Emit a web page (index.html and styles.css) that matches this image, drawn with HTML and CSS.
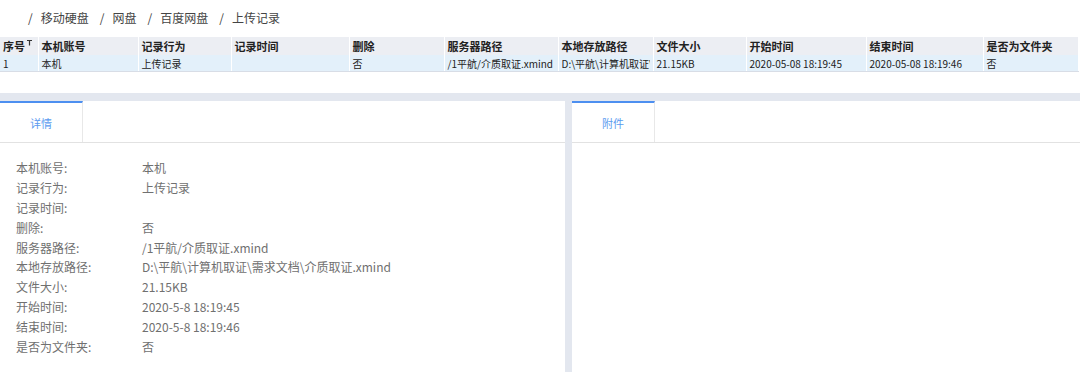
FILE: index.html
```html
<!DOCTYPE html>
<html lang="zh-CN">
<head>
    <meta charset="UTF-8">
    <title>上传记录</title>
    <link rel="stylesheet" href="styles.css">
</head>
<body>

    <nav class="crumbs">
        <span class="sep">/</span><span>移动硬盘</span>
        <span class="sep">/</span><span>网盘</span>
        <span class="sep">/</span><span>百度网盘</span>
        <span class="sep">/</span><span>上传记录</span>
    </nav>

    <table class="grid">
        <colgroup>
            <col style="width:38px"><col style="width:100px"><col style="width:93px"><col style="width:118px">
            <col style="width:95px"><col style="width:114px"><col style="width:95px"><col style="width:93px">
            <col style="width:120px"><col style="width:117px"><col style="width:95px"><col>
        </colgroup>
        <thead>
            <tr>
                <th>序号<svg class="pin" width="5" height="6" viewBox="0 0 5 6"><path d="M0 0.5h5M2.5 0.5v5" stroke="#333" stroke-width="1.2" fill="none"/></svg></th>
                <th>本机账号</th>
                <th>记录行为</th>
                <th>记录时间</th>
                <th>删除</th>
                <th>服务器路径</th>
                <th>本地存放路径</th>
                <th>文件大小</th>
                <th>开始时间</th>
                <th>结束时间</th>
                <th>是否为文件夹</th>
                <th class="end"></th>
            </tr>
        </thead>
        <tbody>
            <tr>
                <td>1</td>
                <td>本机</td>
                <td>上传记录</td>
                <td></td>
                <td>否</td>
                <td>/1平航/介质取证.xmind</td>
                <td><div class="clip">D:\平航\计算机取证\需求文档\介质取证.xmind</div></td>
                <td>21.15KB</td>
                <td>2020-05-08 18:19:45</td>
                <td>2020-05-08 18:19:46</td>
                <td>否</td>
                <td class="end"></td>
            </tr>
        </tbody>
    </table>

    <section class="panels">
        <div class="panel left">
            <div class="tabs"><div class="tab">详情</div></div>
            <dl class="info">
                <div class="line"><dt>本机账号:</dt><dd>本机</dd></div>
                <div class="line"><dt>记录行为:</dt><dd>上传记录</dd></div>
                <div class="line"><dt>记录时间:</dt><dd></dd></div>
                <div class="line"><dt>删除:</dt><dd>否</dd></div>
                <div class="line"><dt>服务器路径:</dt><dd>/1平航/介质取证.xmind</dd></div>
                <div class="line"><dt>本地存放路径:</dt><dd>D:\平航\计算机取证\需求文档\介质取证.xmind</dd></div>
                <div class="line"><dt>文件大小:</dt><dd>21.15KB</dd></div>
                <div class="line"><dt>开始时间:</dt><dd>2020-5-8 18:19:45</dd></div>
                <div class="line"><dt>结束时间:</dt><dd>2020-5-8 18:19:46</dd></div>
                <div class="line"><dt>是否为文件夹:</dt><dd>否</dd></div>
            </dl>
        </div>
        <div class="panel right">
            <div class="tabs"><div class="tab">附件</div></div>
        </div>
    </section>

</body>
</html>
```

FILE: styles.css
```css
body { margin: 0; background: #fff; font-family: "Noto Sans CJK SC", "Noto Sans", sans-serif; color: #333; }
.crumbs { height: 35px; display: flex; align-items: center; padding-left: 28px; font-size: 12px; color: #444; }
.crumbs .sep { margin-right: 8px; }
.crumbs span + .sep { margin-left: 11px; }
.grid { width: 1080px; border-collapse: collapse; table-layout: fixed; font-size: 10px; margin-top: 2px; }
.grid th, .grid td { text-align: left; padding: 0 3px; white-space: nowrap; overflow: hidden; border-right: 1px solid #fff; }
.grid th { height: 18px; background: #eceef3; font-weight: bold; font-size: 11px; color: #222; }
.grid td { height: 16px; background: #e3f0fa; color: #222; border-bottom: 1px solid #d8dde6; }
.grid th.end, .grid td.end { background: #fff; border-left: 1px solid #c9ccd2; border-bottom: none; }
.clip { width: 88px; overflow: hidden; }
.pin { vertical-align: top; margin-left: 2px; margin-top: 2px; }
.panels { display: flex; gap: 7px; margin-top: 21px; background: #e3e7ef; padding-top: 8px; height: 271px; }
.panel { background: #fff; }
.left { width: 565px; }
.right { flex: 1; }
.tabs { height: 41px; border-bottom: 1px solid #e2e2e2; display: flex; }
.tab { width: 82px; border-top: 2px solid #4d8ff0; border-right: 1px solid #e8e8e8; display: flex; align-items: center; justify-content: center; font-size: 11px; color: #5b9bf0; }
.info { margin: 15px 0 0 16px; font-size: 12px; color: #707070; }
.line { display: flex; height: 19.8px; align-items: center; }
.info dt { width: 126px; }
.info dd { margin: 0; }
```
